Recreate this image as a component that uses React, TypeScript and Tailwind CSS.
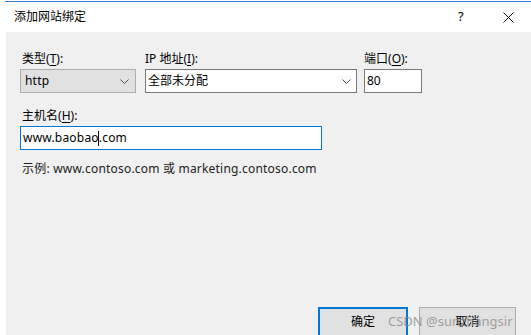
const font = '"Segoe UI", "Noto Sans", "Noto Sans CJK SC", sans-serif';

function Chevron() {
  return (
    <svg width="9" height="5" viewBox="0 0 9 5" className="shrink-0">
      <path d="M0.5 0.5 L4.5 4.5 L8.5 0.5" fill="none" stroke="#505050" strokeWidth="1" />
    </svg>
  );
}

function Label({ text, k, className = "" }: { text: string; k: string; className?: string }) {
  return (
    <div className={`h-[19px] text-[12px] leading-[19px] text-black ${className}`}>
      {text}(<span className="underline underline-offset-2">{k}</span>):
    </div>
  );
}

export default function App() {
  return (
    <div
      className="relative flex h-[335px] w-[531px] flex-col overflow-hidden bg-white text-black"
      style={{ fontFamily: font }}
    >
      <div className="ml-[5px] mt-[1px] h-[1px] bg-[#3a7dca]" />
      <div className="flex h-[30px] items-center pl-[14px] text-[12px]">
        <span className="flex-1">添加网站绑定</span>
        <span className="w-[14px] text-[13px]">?</span>
        <svg width="11" height="11" viewBox="0 0 11 11" className="ml-[31px] mr-[17px]">
          <path d="M0.5 0.5 L10.5 10.5 M10.5 0.5 L0.5 10.5" stroke="#111" strokeWidth="1" />
        </svg>
      </div>

      <div className="ml-[6px] flex flex-1 flex-col bg-[#f0f0f0] pl-[14px] pr-[15px] pt-[17px]">
        <div className="flex items-start">
          <div className="flex w-[116px] flex-col">
            <Label text="类型" k="T" className="pl-[2px]" />
            <div className="mt-[1px] flex h-[24px] items-center border border-[#adadad] bg-[#e1e1e1] pl-[4px] pr-[6px] text-[12px] tracking-[0.2px]">
              <span className="flex-1">http</span>
              <Chevron />
            </div>
          </div>
          <div className="ml-[9px] flex w-[212px] flex-col">
            <Label text="IP 地址" k="I" />
            <div className="mt-[1px] flex h-[24px] items-center border border-[#7a7a7a] bg-white pl-[2px] pr-[5px] text-[12px]">
              <span className="flex-1">全部未分配</span>
              <Chevron />
            </div>
          </div>
          <div className="ml-[7px] flex w-[58px] flex-col">
            <Label text="端口" k="O" />
            <div className="mt-[1px] flex h-[24px] items-center border border-[#7a7a7a] bg-white pl-[2px] text-[12px]">
              80
            </div>
          </div>
        </div>

        <Label text="主机名" k="H" className="mt-[13px] pl-[2px]" />
        <div className="mt-[1px] flex h-[24px] w-[302px] items-center border border-[#0078d7] bg-white pl-[2px] text-[12px] tracking-[0.2px]">
          <span>www.baobao</span>
          <span className="mx-[-0.5px] h-[15px] w-[1px] bg-black" />
          <span>.com</span>
        </div>

        <div className="mt-[9px] pl-[2px] text-[12px] leading-[19px] tracking-[0.2px] text-[#222]">
          示例: www.contoso.com 或 marketing.contoso.com
        </div>

        <div className="flex-1" />

        <div className="mb-[-2px] flex justify-end gap-[11px]">
          <button className="h-[30px] w-[90px] border-2 border-[#0078d7] bg-[#e1e1e1] text-[12px]">
            确定
          </button>
          <button className="h-[30px] w-[97px] border border-[#adadad] bg-[#e1e1e1] text-[12px]">
            取消
          </button>
        </div>
      </div>

      <div className="pointer-events-none absolute left-[388px] top-[312px] text-[13px] text-[#8a8a8a]/80">
        CSDN @sunzhangsir
      </div>
    </div>
  );
}
